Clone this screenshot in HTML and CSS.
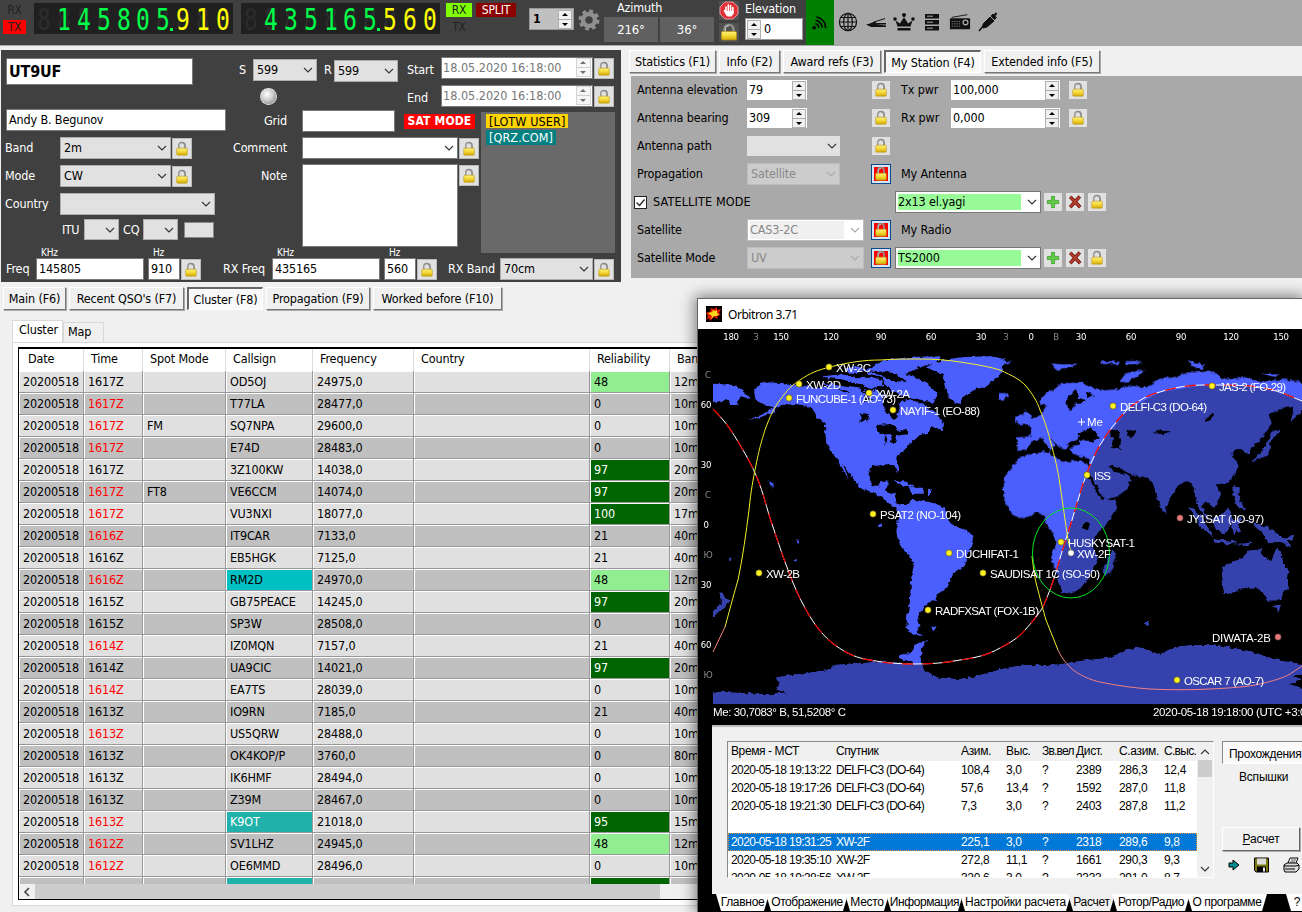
FILE: index.html
```html
<!DOCTYPE html>
<html lang="en">
<head>
<meta charset="utf-8">
<title>Logger</title>
<link rel="stylesheet" href="styles.css">
</head>
<body>
<svg class="defs" width="0" height="0" aria-hidden="true">
  <defs>
    <linearGradient id="gold" x1="0" x2="0" y1="0" y2="1"><stop offset="0" stop-color="#fff27a"/><stop offset=".5" stop-color="#f4d838"/><stop offset="1" stop-color="#d3aa08"/></linearGradient>
    <symbol id="lock" viewBox="0 0 16 18"><path d="M4.500 9V5.500a3.500 3.700 0 0 1 7 0V9" fill="none" stroke="#8d8d8d" stroke-width="2"/><path d="M5 8V5.500a3 3 0 0 1 3-3" fill="none" stroke="#d4d4d4" stroke-width=".8"/><rect x="2" y="8" width="12" height="8" rx="1" fill="url(#gold)" stroke="#b89918" stroke-width=".7"/></symbol>
    <symbol id="chev" viewBox="0 0 10 6"><path d="M1 1l4 4 4-4" fill="none" stroke="currentColor" stroke-width="1.100"/></symbol>
    <symbol id="plus" viewBox="0 0 16 16"><path d="M6.200 1.500h3.600v4.700h4.700v3.600H9.800v4.700H6.200V9.800H1.500V6.200h4.700z" fill="#62cc44" stroke="#2c9a20" stroke-width=".8"/></symbol>
    <symbol id="cross" viewBox="0 0 16 16"><path d="M2.500 2L14 14M13.500 1.500L2.500 14" stroke="#6a2018" stroke-width="4"/><path d="M2.800 2.300L13.700 13.700M13.200 2L2.800 13.500" stroke="#b83a28" stroke-width="2.200"/></symbol>
  </defs>
</svg>
<header class="toolbar">
  <div class="rxtx"><span>RX</span><span class="on-red">TX</span></div>
  <div class="led" data-value=" 145805.910"></div>
  <div class="led" data-value=" 435165.560"></div>
  <div class="rxtx second"><span class="on-green">RX</span><span>TX</span></div>
  <span class="split">SPLIT</span>
  <div class="spin grey"><b>1</b><i class="ud"></i></div>
  <svg class="gear" viewBox="0 0 22 22"><circle cx="11" cy="11" r="6" fill="none" stroke="#8f8f8f" stroke-width="4.600"/><circle cx="11" cy="11" r="8.800" fill="none" stroke="#8f8f8f" stroke-width="3.400" stroke-dasharray="3.700 3.211"/></svg>
  <div class="azimuth"><span>Azimuth</span><div class="angles"><b>216°</b><b>36°</b></div></div>
  <div class="stopcol">
    <svg viewBox="0 0 20 19"><path d="M6 1h8l5 5v7l-5 5H6l-5-5V6z" fill="#e03038" stroke="#f0b0b0" stroke-width=".8"/><path d="M7 12V6M9.300 11V4M11.600 11V4.500M13.800 12V6.500M5.500 9.500L8 14" stroke="#fff" stroke-width="1.600" stroke-linecap="round"/><path d="M6.300 10h8.300v2.500L12.500 15.500H8.500z" fill="#fff"/></svg>
    <svg viewBox="0 0 16 18" preserveAspectRatio="none"><use href="#lock"/></svg>
  </div>
  <div class="elev"><span>Elevation</span><div class="spin left"><i class="ud"></i><b>0</b></div></div>
  <div class="cast"><svg viewBox="0 0 16 16"><circle cx="3" cy="13" r="1.700"/><path d="M4 9.200a4 4 0 0 1 3.300 4M4.500 6a7 7 0 0 1 6 7M5 2.800a10 10 0 0 1 8.800 10.500" fill="none" stroke="#000" stroke-width="1.500"/></svg></div>
  <div class="modules">
    <svg viewBox="0 0 20 20" fill="none" stroke="#111" stroke-width="1.200"><circle cx="10" cy="10" r="8.600"/><ellipse cx="10" cy="10" rx="4.300" ry="8.600"/><path d="M1.400 10h17.200M10 1.400v17.200M3 5.500h14M3 14.500h14"/></svg>
    <svg viewBox="0 0 22 20"><path d="M1 12.500c3-.500 6-2 9-3l1 1.500h10v1.500H11l10 1v1.500H6z" fill="#111"/><path d="M9 10L20 6.500" stroke="#111"/></svg>
    <svg viewBox="0 0 22 20"><path d="M4.500 14.500L2.500 8.500l4.500 3 4-6.500 4 6.500 4.500-3-2 6zM4.500 16h13v2.500h-13z" fill="#111"/><circle cx="2" cy="7" r="1.800" fill="#111"/><circle cx="20" cy="7" r="1.800" fill="#111"/><circle cx="11" cy="3" r="2" fill="#111"/></svg>
    <svg viewBox="0 0 20 20"><path d="M3 2h14v4.500H3zM3 8h14v4.500H3zM3 14h14v4.500H3z" fill="#111"/><path d="M5 4.200h6M5 10.200h6M5 16.200h6" stroke="#a9a9a9"/></svg>
    <svg viewBox="0 0 24 20"><path d="M2 6h20a1 1 0 0 1 1 1V18H1V7a1 1 0 0 1 1-1z" fill="#111"/><path d="M3 5l17-3" stroke="#111"/><circle cx="18" cy="10.500" r="3.300" fill="#a9a9a9"/><circle cx="18" cy="10.500" r="1.800"/><path d="M3 9.500h9M3 12h9M3 14.500h9" stroke="#777" stroke-dasharray="1.500 1"/></svg>
    <svg viewBox="0 0 20 20"><path d="M1 19l5-6" stroke="#111" stroke-width="1.500"/><path d="M5 12l7-7 4 4-7 6-4 1zM11 5l5 5M13 4l3.500 3.500 1.800-1.700L15 2z" fill="#111" stroke="#111"/><path d="M16 4l2.500-3" stroke="#111" stroke-width="2"/></svg>
  </div>
</header>

<main class="upper">
  <section class="qso">
    <div class="qso-main">
      <div class="qso-left">
        <div class="inp call">UT9UF</div>
        <div class="inp name">Andy B. Begunov</div>
        <div class="row"><label>Band</label><div class="combo w111">2m<svg><use href="#chev"/></svg></div><span class="lk"><svg><use href="#lock"/></svg></span></div>
        <div class="row"><label>Mode</label><div class="combo w111">CW<svg><use href="#chev"/></svg></div><span class="lk"><svg><use href="#lock"/></svg></span></div>
        <div class="row"><label>Country</label><div class="combo w155"><svg><use href="#chev"/></svg></div></div>
        <div class="row itu"><label>ITU</label><div class="combo w35"><svg><use href="#chev"/></svg></div><label>CQ</label><div class="combo w35"><svg><use href="#chev"/></svg></div><span class="blank"></span></div>
      </div>
      <div class="qso-right">
        <div class="qso-top">
          <div class="rst">
            <div class="row"><label>S</label><div class="combo w64">599<svg><use href="#chev"/></svg></div><label class="r">R</label><div class="combo w64 low">599<svg><use href="#chev"/></svg></div></div>
            <span class="bulb"></span>
          </div>
          <div class="times">
            <div class="row"><label>Start</label><div class="inp time">18.05.2020 16:18:00<i class="ud dim"></i></div><span class="lk"><svg><use href="#lock"/></svg></span></div>
            <div class="row"><label>End</label><div class="inp time">18.05.2020 16:18:00<i class="ud dim"></i></div><span class="lk"><svg><use href="#lock"/></svg></span></div>
          </div>
        </div>
        <div class="qso-mid">
          <div class="notes">
            <div class="row"><label>Grid</label><div class="inp grid"></div><strong class="sat">SAT MODE</strong></div>
            <div class="row"><label>Comment</label><div class="combo white w156"><svg><use href="#chev"/></svg></div><span class="lk"><svg><use href="#lock"/></svg></span></div>
            <div class="row note"><label>Note</label><div class="inp area"></div><span class="lk"><svg><use href="#lock"/></svg></span></div>
          </div>
          <div class="flags"><span class="lotw">[LOTW USER]</span><span class="qrz">[QRZ.COM]</span></div>
        </div>
      </div>
    </div>
    <div class="freq">
      <label class="f1">Freq</label>
      <div class="fld w108"><small>KHz</small><div class="inp">145805</div></div>
      <div class="fld w32"><small>Hz</small><div class="inp">910</div></div>
      <span class="lk"><svg><use href="#lock"/></svg></span>
      <label class="f2">RX Freq</label>
      <div class="fld w108"><small>KHz</small><div class="inp">435165</div></div>
      <div class="fld w32"><small>Hz</small><div class="inp">560</div></div>
      <span class="lk"><svg><use href="#lock"/></svg></span>
      <label class="f3">RX Band</label>
      <div class="combo w93">70cm<svg><use href="#chev"/></svg></div>
      <span class="lk"><svg><use href="#lock"/></svg></span>
    </div>
  </section>
  <section class="station">
    <nav class="fbar"><span class="fb w87">Statistics (F1)</span><span class="fb w61">Info (F2)</span><span class="fb w98">Award refs (F3)</span><span class="fb w97 active">My Station (F4)</span><span class="fb w116">Extended info (F5)</span></nav>
    <div class="st-grid">
      <label>Antenna elevation</label><div class="spin flat w60">79<i class="ud"></i></div><span class="lk p"><svg><use href="#lock"/></svg></span>
      <div class="rt"><label>Tx pwr</label><div class="spin flat w109">100,000<i class="ud"></i></div><span class="lk p"><svg><use href="#lock"/></svg></span></div>
      <label>Antenna bearing</label><div class="spin flat w60">309<i class="ud"></i></div><span class="lk p"><svg><use href="#lock"/></svg></span>
      <div class="rt"><label>Rx pwr</label><div class="spin flat w109">0,000<i class="ud"></i></div><span class="lk p"><svg><use href="#lock"/></svg></span></div>
      <label>Antenna path</label><div class="combo plain w93"><svg><use href="#chev"/></svg></div><span class="lk p"><svg><use href="#lock"/></svg></span><div></div>
      <label>Propagation</label><div class="combo dis w93">Satellite<svg><use href="#chev"/></svg></div><span class="lk red"><svg><use href="#lock"/></svg></span><div class="rt"><label>My Antenna</label></div>
      <div class="check"><svg viewBox="0 0 13 13"><rect x=".5" y=".5" width="12" height="12" fill="#fff" stroke="#222"/><path d="M2.500 6.500l3 3 5-6" fill="none" stroke="#222" stroke-width="1.300"/></svg>SATELLITE MODE</div><div class="rt"><div class="pick"><span>2x13 el.yagi</span><svg><use href="#chev"/></svg></div><span class="lk p"><svg><use href="#plus"/></svg></span><span class="lk p"><svg><use href="#cross"/></svg></span><span class="lk p"><svg><use href="#lock"/></svg></span></div>
      <label>Satellite</label><div class="combo dis wht w117"><em>CAS3-2C</em><svg><use href="#chev"/></svg></div><span class="lk red"><svg><use href="#lock"/></svg></span><div class="rt"><label>My Radio</label></div>
      <label>Satellite Mode</label><div class="combo dis w117">UV<svg><use href="#chev"/></svg></div><span class="lk red"><svg><use href="#lock"/></svg></span><div class="rt"><div class="pick"><span>TS2000</span><svg><use href="#chev"/></svg></div><span class="lk p"><svg><use href="#plus"/></svg></span><span class="lk p"><svg><use href="#cross"/></svg></span><span class="lk p"><svg><use href="#lock"/></svg></span></div>
    </div>
  </section>
</main>

<nav class="fbar lower"><span class="fb w63">Main (F6)</span><span class="fb w115">Recent QSO's (F7)</span><span class="fb w76 active">Cluster (F8)</span><span class="fb w104">Propagation (F9)</span><span class="fb w129">Worked before (F10)</span></nav>
<div class="subtabs"><span class="cur">Cluster</span><span>Map</span></div>
<section class="pane"><div class="table">
  <div class="tr head"><span>Date</span><span>Time</span><span>Spot Mode</span><span>Callsign</span><span>Frequency</span><span>Country</span><span>Reliability</span><span>Band</span></div>
  <div class="rows" id="spots"></div>
  <div class="hscroll"><svg viewBox="0 0 8 10"><path d="M6 1L2 5l4 4" fill="none" stroke="#444" stroke-width="1.600"/></svg><i></i></div>
</div></section>

<aside class="orbitron">
  <div class="title"><svg viewBox="0 0 16 16"><rect width="16" height="16"/><path d="M0 7l5-2-1-3 4 1 3-2v3l4-1-2 4 2 2-4 1 1 3-4-2-4 4-1-3-3 2 2-4z" fill="#e31b00"/><path d="M2 7l4-1 1-2 2 1 2-1v3l2 1-2 2-3 0-3 3 1-3z" fill="#ffd51a"/></svg>Orbitron 3.71</div>
  <svg class="map" viewBox="698 329 604 394">
    <defs>
      <filter id="coast" x="0" y="0" width="100%" height="100%"><feTurbulence type="fractalNoise" baseFrequency=".2" numOctaves="2" seed="8"/><feDisplacementMap in="SourceGraphic" scale="5" xChannelSelector="R" yChannelSelector="G"/></filter>
      <path id="dayline" d="M713 409C723 419 730 428 737 440C745 453 751 464 755 473C762 488 765 502 770 518C775 533 779 545 785 562C791 578 797 594 805 608C815 626 823 636 835 645C847 654 857 658 870 660C885 663 900 664 915 664C930 664 945 663 960 660C975 658 988 655 1000 648C1010 643 1018 638 1025 630C1033 621 1038 615 1043 607C1049 593 1054 580 1058 565C1062 551 1067 536 1072 520C1076 507 1079 496 1083 484C1088 470 1093 457 1100 445C1108 432 1117 420 1127 410C1137 401 1148 395 1160 392C1175 387 1190 385 1205 385C1220 385 1235 385 1250 386C1263 387 1275 390 1285 394L1302 401"/>
      <clipPath id="night"><path d="M713 409L737 440L755 473L770 518L785 562L805 608L835 645L870 660L915 664L960 660L1000 648L1025 630L1043 607L1058 565L1072 520L1083 484L1100 445L1127 410L1160 392L1205 385L1250 386L1285 394L1302 401V704H713z"/></clipPath>
      <clipPath id="frame"><rect x="713" y="345" width="589" height="359"/></clipPath>
      <g id="land">
        <g transform="translate(697 298) scale(.3333)">
          <path d="M48 254L110 258L120 268L150 288L158 300L128 292L118 316L100 318L85 300L60 312L30 300V254z"/>
          <path d="M168 276L185 255L205 250L260 253L330 262L360 268L400 262L440 280L480 268L500 282L530 270L555 290L560 335L590 362L604 340L605 310L640 300L680 318L700 335L720 350L738 375L735 394L700 382L690 402L660 410L640 430L622 450L600 470L597 490L606 512L600 522L590 500L570 496L520 502L512 530L520 558L545 562L552 545L572 548L562 575L590 585L597 615L625 618L640 602L700 610L740 625L750 665H605L598 634L575 612L545 590L510 578L480 560L460 530L434 492L452 540L428 505L415 478L395 455L385 430L382 400L380 370L358 355L345 335L325 320L290 315L250 318L225 340L180 358L150 361L190 348L230 325L195 318L172 300z"/>
          <path d="M680 205L740 182L800 174L880 172L918 180V210L890 240L870 262L835 270L800 290L785 318L770 312L750 290L740 260L735 225L700 212zM505 212L560 183L640 174L730 172L715 192L660 205L630 222L570 236L515 226zM375 232L430 226L480 236L540 236L560 258L510 272L450 276L405 268L375 254zM545 228L610 222L660 236L695 262L722 285L705 312L650 298L610 290L570 268z"/>
          <path d="M578 542L625 548L655 566L620 562zM634 566L680 566V584L640 584zM690 570h9v18h-9zM208 543l20 12-4 14zM440 208l40-6 30 12-50 10zM868 268l14-6z"/>
        </g>
        <g transform="translate(1000 298) scale(.3333)">
          <path d="M5 560L10 535L38 500L52 475L90 465L145 455L150 470L185 488L240 485L265 500L290 560L312 602L348 606L345 630L325 665L285 705L272 740L290 775L280 800L262 835L235 870L210 882L185 880L170 830L158 800L150 776L165 735L155 700L135 675L132 655L110 640L85 652L50 658L25 635L8 600z"/>
          <path d="M46 455L48 415L88 412L92 388L72 372L100 358L122 345L138 318L118 318V298L150 275L185 252L240 250L300 275L350 270L380 260L440 265L470 240L520 235L560 220L640 218L665 240L740 235L780 250L840 240L915 250V325L870 365L882 322L850 325L800 345L812 370L795 400L770 425L750 445L740 468L720 445L700 450L690 465L712 500L700 530L680 550L645 555L658 590L640 625L610 605L600 620L625 665L600 640L585 600L580 565L560 545L540 550L510 590L497 620L485 630L470 600L455 550L440 535L410 530L345 510L390 540L375 570L350 590L315 600L295 570L275 530L262 480L210 462L205 445L235 435L240 420L205 430L190 452L160 430L140 410L164 440L150 455L120 418L90 430L75 455z"/>
          <path d="M50 375L72 335L90 345L98 370L60 380zM44 350l20-4-4 20-18 2zM355 248L375 222L435 212L405 234L370 252zM148 193L190 196L232 193L200 208L170 214zM560 184L612 198L602 212L570 200zM302 188h50v7h-50zM370 186h50l-8 9h-38zM-6 186h38l-24 12h-14zM-6 282h26l4 10-16 10h-14zM745 490L775 468L796 440L812 398L837 393L808 427L803 467L760 484zM695 558L716 570L712 600L732 630L712 624L696 590zM488 618l10 12-4 16-10-8zM780 222l60 2-20 10z"/>
          <path d="M313 831L306 806L318 786L338 754L344 776L330 823z"/>
        </g>
        <g transform="translate(697 510) scale(.3333)">
          <path d="M597 40L600 15L625-18L650-30L700-22L740-10L745 20L765 45L800 55L828 75L826 100L808 130L800 165L765 190L750 225L718 252L716 268L690 275L672 295L660 320L668 345L655 350L660 365L675 375L645 370L625 350L628 310L635 280L640 200L650 155L625 130L605 100L595 65zM696 352l20-6-6 12zM605 432L640 425L650 400L688 388L672 410L668 440L678 482H640L645 455L600 440z"/>
          <path d="M30 542L110 545L200 550L270 548L235 535L245 515L232 500L300 490L390 478L410 462L450 460L510 455L560 452L640 460L680 480L720 500L780 505L830 498L880 482L920 478V600H30zM65 242L85 265L97 268L78 292L40 322V306L70 278zM540 40h12v10h-10zM294 86l10 12-4 5zM92 146l10-7-6 12zM288 145h8v6h-8z"/>
        </g>
        <g transform="translate(1000 510) scale(.3333)">
          <path d="M-10 478L30 468L80 462L160 462L240 450L330 440L380 415L420 410L450 420L475 432L520 408L580 402L640 402L700 412L760 425L840 450L915 462V490L870 492L900 506L866 520L915 535V600H-10z"/>
          <path d="M662 170L685 155L720 145L740 120L780 115L785 140L810 150L830 106L845 150L862 185L860 225L835 268L800 268L790 250L765 228L720 235L690 245L670 245L665 210zM816 282L840 282L832 304zM566-12L602 16L624 56L636 76L600 48zM634 25L685-8L696 30L672 70L643 52zM636 82L704 92V100L642 94zM692 35L722 16L718 32L708 38L720 62L706 56L700 72zM740 26L760 38L800 48L850 83L874 112L830 92L800 97L785 65zM845 85l32-14-8 16zM432 331h15v12h-12zM705 98h28l18-9-10 16z"/>
        </g>
      </g>
    </defs>
    <rect x="698" y="329" width="604" height="394"/>
    <g clip-path="url(#frame)">
      <g transform="translate(1 1)"><use href="#land" fill="#4c5fff" filter="url(#coast)"/></g>
      <g clip-path="url(#night)"><g transform="translate(1 1)"><use href="#land" fill="#3543ae" filter="url(#coast)"/></g></g>
      <g fill="#000" filter="url(#coast)">
        <path d="M877 425l14-1 8 7 7-2 2 5-11 2-3 8-4-1 2-9-12 1zM860 413l9 1-1 9-3-3-5 3 2-6zM885 436l4 1-5 9zM820 378l20 1 20 5 15 7-20-3-32-5zM850 368l20 3 24 10 14 1-14-9zM864 395l10 4-9 3z"/>
        <path d="M1079 433l10-5 11 9-8 4-14-1zM1110 431l8-1 3 10-1 9-9-1 2-9zM1128 430l8 1-3 7-6-2zM1066 401l6-8 4-3 2 8 8 2-6 4-4-2-5 9-3-3zM1205 419l9-7-3 8-6 2zM1153 433l8-4 9 4-9 1zM1108 465l14 4 5 5-12-2zM1084 522l6 1-2 7-6-2zM1090 474l14 26-4-1-12-23zM1087 392l7 3-7 3z"/>
      </g>
    </g>
    <use href="#dayline" class="line" stroke="#fff"/>
    <use href="#dayline" class="line" stroke="#e80000" stroke-width="1.300" stroke-dasharray="11 9"/>
    <path class="line" stroke="#f2ee28" d="M725 627C731 605 735 590 738 580C743 556 746 533 749 510C751 490 753 480 756 465C760 445 762 440 765 430C770 416 774 408 780 400C787 390 792 385 800 380C810 373 818 370 830 367C850 362 865 360 880 360C895 359 905 359 920 359C935 359 947 360 960 362C980 365 990 367 1000 370C1013 376 1019 379 1025 385C1032 393 1037 401 1040 410C1045 422 1048 431 1050 440C1055 458 1058 470 1060 485C1063 505 1065 520 1068 540L1071 552M1032 556C1034 573 1035 580 1038 590C1041 602 1043 610 1046 620L1058 650"/>
    <path class="line" stroke="#f28080" d="M713 652L725 627M1058 650C1062 659 1067 664 1073 670C1083 677 1093 681 1105 683C1120 686 1135 688 1150 689C1170 690 1190 690 1210 689C1230 688 1247 687 1260 684C1273 681 1283 678 1290 674L1302 666"/>
    <ellipse class="line" stroke="#00e620" cx="1071" cy="553" rx="38.500" ry="45"/>
    <g id="mapmarks"></g>
  </svg>
  <div class="passes">
    <div class="plist">
      <div class="prow phead"><span>Время - МСТ</span><span>Спутник</span><span>Азим.</span><span>Выс.</span><span>Зв.вел</span><span>Дист.</span><span>С.азим.</span><span>С.выс.</span></div>
      <div class="pbody" id="passes"></div>
      <div class="vscroll"><svg><use href="#chev"/></svg><i></i><svg><use href="#chev"/></svg></div>
    </div>
    <div class="pside">
      <span class="pressed">Прохождения</span><span class="flat2">Вспышки</span><span class="push"><u>Р</u>асчет</span>
      <div class="picons">
        <svg viewBox="0 0 12 12"><path d="M1 4h4V1l6 5-6 5V8H1z" fill="#008c8c" stroke="#000"/></svg>
        <svg viewBox="0 0 15 15"><path d="M.5.500h14v14H2l-1.500-1.500z" fill="#7a7a10" stroke="#000"/><rect x="3" y="1" width="9" height="6" fill="#ddd"/><rect x="3" y="9" width="9" height="5.500"/><rect x="9" y="10" width="2" height="4" fill="#eee"/></svg>
        <svg viewBox="0 0 17 16"><path d="M5 6L7 1h8l-2 5" fill="#fff" stroke="#000"/><path d="M1 8l3-2h10l2 2v4l-3 3H2l-1-2z" fill="#ddd" stroke="#000"/><path d="M1 9h12l3-1M2 12h10" stroke="#000" fill="none"/><path d="M8 3h5M7 5h5" stroke="#000" stroke-width=".7"/></svg>
      </div>
    </div>
  </div>
  <div class="otabs"><span class="t1">Главное</span><span class="t2">Отображение</span><span class="t3">Место</span><span class="t4">Информация</span><span class="t5">Настройки расчета</span><span class="t6 sel">Расчет</span><span class="t7">Ротор/Радио</span><span class="t8">О программе</span><span class="t9">?</span></div>
</aside>
<script src="script.js"></script>
</body>
</html>
```

FILE: styles.css
```css
* { box-sizing: border-box; }
body { margin: 0; width: 1302px; height: 912px; overflow: hidden; position: relative; background: #f0f0f0; font: 12.5px "DejaVu Sans Condensed", "DejaVu Sans", sans-serif; font-stretch: condensed; letter-spacing: -.15px; color: #000; white-space: nowrap; line-height: 16px; }
.defs { display: block; }
i, em { font-style: normal; }
.toolbar { display: flex; align-items: flex-start; height: 46px; background: #404040; border-bottom: 1px solid #aaa; }
.rxtx { display: flex; flex-direction: column; gap: 3px; width: 23px; margin: 3px 8px 0 3px; color: #222; font-size: 12px; text-align: center; line-height: 14px; }
.rxtx.second { width: 26px; margin: 3px 4px 0 6px; }
.on-red { background: #f00; }
.on-green { background: #7fff00; }
.led { display: flex; width: 199px; height: 31px; margin-top: 3px; margin-right: 8px; background: #202020; }
.led + .rxtx { margin-left: -2px; }
.digit { position: relative; width: 19.900px; height: 31px; flex: none; font: 31px/33px "DejaVu Sans Mono", monospace; letter-spacing: 0; text-align: center; color: #00ff48; }
.digit.y { color: #ff0; }
.digit span, .digit::before { display: block; width: 20px; transform: scaleX(.74); }
.digit::before { content: "8"; position: absolute; left: 0; top: 0; color: #2c2c2c; }
.digit span { position: relative; }
.digit .dot { position: absolute; right: 0; bottom: 3px; width: 3px; height: 3px; background: currentColor; }
.split { width: 40px; height: 14px; margin: 3px 13px 0 0; background: #8b0000; color: #fff; font-size: 12px; line-height: 15px; text-align: center; }
.spin { display: flex; align-items: center; justify-content: space-between; height: 22px; background: #fff; border: 1px solid #999; padding: 0 1px 0 3px; }
.spin.grey { width: 45px; background: #c0c0c0; margin: 8px 4px 0 0; }
.ud { width: 14px; height: 19px; flex: none; background: linear-gradient(#aaa, #aaa) 0 8px/14px 1px no-repeat, #f0f0f0; border: 1px solid #b0b0b0; position: relative; }
.ud::before, .ud::after { content: ""; position: absolute; left: 3px; border: 3px solid transparent; }
.ud::before { border-bottom-color: #000; border-bottom-width: 3px; top: -1px; }
.ud::after { bottom: -1px; border-top-color: #000; border-top-width: 3px; }
.ud.dim { opacity: .55; }
.gear { width: 22px; height: 22px; margin: 9px 4px 0 0; }
.azimuth { width: 110px; margin-right: 5px; color: #fff; }
.azimuth > span { display: block; margin-left: 13px; height: 17px; }
.angles { display: flex; gap: 2px; }
.angles b { flex: 1; height: 25px; background: #606060; font-weight: normal; line-height: 25px; text-align: center; font-size: 13px; }
.stopcol { display: flex; flex-direction: column; gap: 3px; width: 20px; margin: 1px 6px 0 0; }
.stopcol svg { width: 20px; height: 19px; background: #505050; }
.elev { width: 58px; margin-right: 3px; color: #fff; }
.elev > span { display: block; height: 18px; line-height: 17px; }
.spin.left { color: #000; justify-content: flex-start; gap: 3px; padding-left: 1px; }
.spin.left b { font-weight: normal; }
.cast { width: 28px; height: 45px; background: green; }
.cast svg { width: 17px; height: 17px; margin: 14px 0 0 5px; }
.modules { display: flex; gap: 6px; flex: 1; height: 45px; background: #a9a9a9; padding: 12px 0 0 3px; }
.modules svg { width: 22px; height: 20px; flex: none; }
.upper { display: flex; height: 240px; }
.qso { width: 620px; height: 232px; margin: 4px 8px 0 1px; background: #404040; color: #fff; }
.qso-main { display: flex; height: 197px; }
.qso-left { width: 231px; padding: 8px 0 0 5px; display: flex; flex-direction: column; gap: 6px; }
.inp { height: 22px; background: #fff; color: #000; border: 1px solid #7a7a7a; padding: 0 2px; line-height: 20px; }
.call { width: 187px; height: 27px; margin-bottom: 18px; font: bold 16px/25px "DejaVu Sans Condensed", "DejaVu Sans", sans-serif; font-stretch: condensed; }
.name { width: 220px; }
.row { display: flex; height: 22px; align-items: center; }
.qso-left .row { margin-left: -1px; }
.qso-left .row > label { width: 55px; }
.combo { display: flex; align-items: center; justify-content: space-between; height: 22px; background: #e1e1e1; border: 1px solid #adadad; color: #000; padding: 0 3px; }
.combo svg { width: 10px; height: 6px; margin-left: auto; color: #333; flex: none; }
.combo.white { background: #fff; border-color: #7a7a7a; }
.w111 { width: 111px; } .w155 { width: 155px; } .w35 { width: 35px; } .w64 { width: 64px; } .w156 { width: 156px; } .w93 { width: 93px; } .w117 { width: 117px; } .w108 { width: 108px; } .w32 { width: 32px; } .w60 { width: 60px; } .w109 { width: 109px; }
.w87 { width: 87px; } .w61 { width: 61px; } .w98 { width: 98px; } .w97 { width: 97px; } .w116 { width: 116px; } .w63 { width: 63px; } .w115 { width: 115px; } .w76 { width: 76px; } .w104 { width: 104px; } .w129 { width: 129px; }
.lk { display: flex; align-items: center; justify-content: center; width: 20px; height: 21px; margin: 1px 0 0 1px; background: #e1e1e1; border: 1px solid #bbb; flex: none; }
.lk svg { width: 14px; height: 16px; }
.qso-left .itu { height: 21px; margin: -2px 0 0; }
.itu .combo { height: 21px; }
.qso-left .itu label { width: auto; }
.qso-left .itu label:first-child { margin: 0 4px 0 56px; width: 18px; letter-spacing: -.5px; }
.qso-left .itu label + div + label { width: 20px; margin: 0 0 0 4px; }
.blank { width: 30px; height: 16px; background: #e1e1e1; border: 1px solid #888; margin-left: 6px; }
.qso-right { width: 389px; }
.qso-top { display: flex; height: 59px; }
.rst { width: 173px; padding: 9px 0 0 7px; }
.rst label { width: 14px; }
.rst label.r { width: 10px; margin-left: 7px; }
.rst .low { position: relative; top: 1px; }
.bulb { display: block; width: 17px; height: 17px; margin: 7px 0 0 21px; border-radius: 50%; background: radial-gradient(circle at 40% 35%, #fff, #ccc 45%, #777); border: 1px dotted #fff; }
.times { padding-top: 7px; display: flex; flex-direction: column; gap: 6px; }
.times label { width: 36px; padding: 4px 0 0 2px; }
.time { width: 152px; color: #777; display: flex; justify-content: space-between; padding: 0 1px 0 1px; letter-spacing: 0; }
.time .ud { width: 15px; }
.qso-mid { display: flex; align-items: flex-start; }
.notes { width: 249px; padding-top: 1px; display: flex; flex-direction: column; gap: 5px; }
.notes label { width: 55px; margin-right: 15px; text-align: right; }
.grid { width: 93px; }
.sat { margin-left: 9px; width: 71px; height: 15px; background: #f00; line-height: 15px; font-size: 12px; letter-spacing: .15px; text-align: center; }
.note { height: 83px; align-items: flex-start; }
.note label { padding-top: 4px; }
.area { width: 156px; height: 83px; }
.flags { width: 134px; height: 141px; margin-top: 3px; background: #696969; padding: 2px 5px; display: flex; flex-direction: column; align-items: flex-start; }
.flags span { height: 15px; line-height: 15px; padding: 0 3px; font-size: 12.500px; letter-spacing: .1px; }
.flags .lotw { background: #ffd400; color: #000; height: 14px; margin-bottom: 2px; }
.qrz { background: #008080; }
.freq { display: flex; align-items: flex-end; height: 33px; padding-left: 5px; }
.fld { margin-right: 4px; }
.fld small { display: block; font-size: 10px; line-height: 10px; padding-left: 5px; }
.freq .w32 { margin-right: 0; }
.freq label { line-height: 22px; }
.f1 { width: 30px; } .f2 { width: 49px; margin-left: 22px; } .f3 { width: 52px; margin-left: 11px; }
.fbar { display: flex; gap: 3px; height: 24px; }
.fb { flex: none; border: 1px solid; border-color: #fff #777 #777 #fff; box-shadow: 1px 1px 0 #aaa; text-align: center; line-height: 21px; height: 23px; }
.fb.active { border-color: #666 #fff #fff #666; border-width: 2px 1px 1px 2px; background: #f9f9f9; line-height: 22px; box-shadow: none; }
.station { padding-top: 4px; flex: 1; }
.st-grid { margin: 2px 0 0 2px; height: 202px; background: #a9a9a9; display: grid; grid-template: repeat(7, 28px)/110px 124px 24px auto; align-items: center; padding-left: 6px; }
.st-grid > .lk, .rt .lk { margin: 0; }
.rt { display: flex; align-items: center; }
.rt > label { margin-left: 6px; width: 50px; }
.spin.flat { border: 0; height: 20px; padding-left: 2px; }
.lk.p { border: 0; width: 18px; height: 18px; margin-left: 1px !important; }
.rt .lk.p { margin-left: 9px !important; }
.rt .pick + .lk { margin-left: 3px !important; }
.rt .pick ~ .lk + .lk { margin-left: 4px !important; }
.lk.red { background: #f00; border: 1px solid #0a4b8c; box-shadow: inset 0 0 0 2px #d4e6f5; height: 20px; }
.combo.plain { border: 0; height: 20px; }
.combo.dis { background: #ccc; border-color: #bdbdbd; color: #888; }
.combo.dis svg { color: #aaa; }
.combo.wht { background: #fff; padding-left: 2px; }
.combo em { background: #f0f0f0; width: 94px; line-height: 18px; }
.check { grid-column: 1/4; display: flex; align-items: center; gap: 6px; margin-left: -3px; letter-spacing: .15px; }
.check svg { width: 13px; height: 13px; }
.pick { width: 146px; height: 22px; border: 1px solid #777; background: #fff; display: flex; align-items: center; padding-left: 2px; }
.pick span { width: 123px; background: #98fb98; line-height: 16px; }
.pick svg { width: 10px; height: 6px; margin-left: 6px; color: #333; }
.lower { margin: 1px 0 1px 3px; }
.subtabs { display: flex; align-items: flex-end; height: 30px; padding-left: 12px; }
.subtabs span { border: 1px solid #d9d9d9; border-bottom: 0; height: 20px; padding: 1px 12px 0 4px; }
.subtabs .cur { background: #fff; height: 22px; padding: 1px 4px 0 6px; }
.pane { margin-left: 12px; border: 1px solid #d9d9d9; background: #fff; height: 564px; padding: 4px 0 0 5px; }
.table { border: 1px solid #000; border-top-width: 2px; height: 553px; width: 760px; background: #fff; }
.tr { display: grid; grid-template-columns: 65px 59px 83px 87px 101px 176px 80px 100px; height: 22px; }
.tr.head { height: 22px; }
.head span { border-right: 1px solid #ddd; padding: 2px 0 0 9px; }
.head span + span { padding-left: 7px; }
.rows { height: 513px; overflow: hidden; }
.rows .tr > span { border: solid #999; border-width: 0 1px 1px 0; box-shadow: inset 1px 1px 0 #fff; padding: 3px 0 0 4px; background: #e0e0e0; overflow: hidden; }
.rows .tr:nth-child(even) > span { background: #c0c0c0; }
.rows .tr .late { color: #f00; }
.rows .tr .g1.g1 { background: #90ee90; }
.rows .tr .g2.g2 { background: #006400; color: #fff; }
.rows .tr .c1.c1 { background: #00c0c4; }
.rows .tr .c2.c2 { background: #20b2aa; color: #fff; }
.hscroll { display: flex; align-items: center; height: 15px; background: #f0f0f0; }
.hscroll svg { width: 8px; height: 10px; margin: 0 4px; }
.hscroll i { width: 625px; height: 15px; background: #cdcdcd; }
.orbitron { position: absolute; left: 697px; top: 298px; width: 605px; height: 614px; background: #000; border: solid #666; border-width: 1px 0 0 1px; box-shadow: 0 0 14px 2px rgba(0, 0, 0, .5); font: 12px/18px "Liberation Sans", Arial, sans-serif; letter-spacing: -.45px; overflow: hidden; }
.title { height: 30px; background: #fff; display: flex; align-items: center; gap: 6px; padding-left: 8px; font: 12px "Noto Sans", sans-serif; letter-spacing: -.45px; }
.title svg { width: 16px; height: 16px; }
.map { display: block; width: 604px; height: 394px; }
.line { fill: none; }
.axis { font: 9.500px "DejaVu Sans Condensed", sans-serif; letter-spacing: -.2px; fill: #fff; text-anchor: middle; }
.axis.faint { fill: #888; }
.sat-name { font: 11.500px "Liberation Sans", Arial, sans-serif; letter-spacing: 0; fill: #fff; }
.passes { display: flex; height: 169px; margin-left: 14px; margin-top: 2px; border-top: 2px solid #bbb; background: #f0f0f0; padding: 14px 0 0 15px; }
.plist { position: relative; flex: none; width: 487px; height: 137px; background: #fff; border: 1px solid #888; border-color: #888 #fff #fff #888; overflow: hidden; }
.prow { display: grid; grid-template-columns: 105px 125px 45px 36px 34px 43px 45px 40px; width: 469px; height: 18px; padding-left: 3px; line-height: 18px; letter-spacing: -.35px; }
.prow span:first-child { letter-spacing: -.6px; }
.prow span:nth-child(2) { letter-spacing: -.75px; }
.phead { background: #f0f0f0; width: 486px; height: 19px; }
.phead span.phead span, .phead span:nth-child(5) { letter-spacing: -.8px; overflow: hidden; }
.phead span:first-child, .phead span:nth-child(2) { letter-spacing: -.4px; }
.phead span:last-child { letter-spacing: -.7px; }
.prow.on { background: #0078d7; color: #fff; outline: 1px dotted #e89038; outline-offset: -1px; }
.vscroll { position: absolute; right: 0; top: 0; width: 16px; height: 135px; background: #f0f0f0; display: flex; flex-direction: column; align-items: center; padding: 7px 0 5px; }
.vscroll svg { width: 10px; height: 6px; color: #333; }
.vscroll svg:first-child { transform: scaleY(-1); }
.vscroll i { width: 14px; height: 17px; background: #cdcdcd; margin: 5px 0 auto; }
.pside { flex: none; margin-left: 8px; width: 90px; display: flex; flex-direction: column; }
.pressed { border: 1px solid; border-color: #888 #fff #fff #888; background: #fafafa; height: 23px; line-height: 24px; padding-left: 6px; letter-spacing: -.3px; }
.flat2 { padding: 4px 0 0 17px; letter-spacing: -.2px; }
.push { width: 78px; height: 24px; margin: 41px 0 6px; border: 1px solid; border-color: #fff #666 #666 #fff; box-shadow: 1px 1px 0 #aaa; text-align: center; line-height: 22px; letter-spacing: -.2px; }
.picons { display: flex; align-items: center; gap: 14px; padding-left: 6px; }
.picons svg { width: 12px; height: 12px; }
.picons svg + svg { width: 15px; height: 16px; }
.picons svg + svg + svg { width: 17px; }
.otabs { display: flex; height: 18px; margin-left: 18px; }
.otabs span { flex: none; height: 17px; background: #fff; text-align: center; line-height: 17px; clip-path: polygon(0 0, 100% 0, calc(100% - 5px) 100%, 5px 100%); margin-right: -3px; letter-spacing: -.3px; }
.otabs .sel { background: #f0f0f0; }
.otabs .t1 { width: 53px; } .otabs .t2 { width: 82px; letter-spacing: -.45px; } .otabs .t3 { width: 44px; } .otabs .t4 { width: 77px; letter-spacing: -.4px; } .otabs .t5 { width: 111px; } .otabs .t6 { width: 47px; } .otabs .t7 { width: 78px; letter-spacing: -.4px; } .otabs .t8 { width: 80px; letter-spacing: -.4px; } .otabs .t9 { width: 40px; margin-left: 22px; padding-right: 18px; }
```

FILE: script.js
```js
const make = (tag, cls, text) => {
  const el = document.createElement(tag);
  if (cls) el.className = cls;
  if (text !== undefined) el.textContent = text;
  return el;
};

document.querySelectorAll(".led").forEach(led => {
  let afterDot = false;
  for (const ch of led.dataset.value) {
    if (ch === ".") {
      led.lastChild.append(make("b", "dot"));
      afterDot = true;
      continue;
    }
    const d = make("div", afterDot ? "digit y" : "digit");
    if (ch !== " ") d.append(make("span", "", ch));
    led.append(d);
  }
});

// time|mode|call|frequency|reliability|band ; "!" marks a late spot
const spots = `1617Z||OD5OJ|24975,0|48|12m
!1617Z||T77LA|28477,0|0|10m
!1617Z|FM|SQ7NPA|29600,0|0|10m
!1617Z||E74D|28483,0|0|10m
1617Z||3Z100KW|14038,0|97|20m
!1617Z|FT8|VE6CCM|14074,0|97|20m
!1617Z||VU3NXI|18077,0|100|17m
!1616Z||IT9CAR|7133,0|21|40m
1616Z||EB5HGK|7125,0|21|40m
!1616Z||RM2D|24970,0|48|12m|c1
1615Z||GB75PEACE|14245,0|97|20m
1615Z||SP3W|28508,0|0|10m
!1614Z||IZ0MQN|7157,0|21|40m
1614Z||UA9CIC|14021,0|97|20m
!1614Z||EA7TS|28039,0|0|10m
1613Z||IO9RN|7185,0|21|40m
!1613Z||US5QRW|28488,0|0|10m
1613Z||OK4KOP/P|3760,0|0|80m
1613Z||IK6HMF|28494,0|0|10m
1613Z||Z39M|28467,0|0|10m
!1613Z||K9OT|21018,0|95|15m|c2
!1612Z||SV1LHZ|24945,0|48|12m
!1612Z||OE6MMD|28496,0|0|10m`;
const box = document.getElementById("spots");
const addSpot = cells => {
  const tr = make("div", "tr");
  cells.forEach(([text, cls]) => tr.append(make("span", cls, text)));
  box.append(tr);
};
spots.split("\n").forEach(line => {
  const [t, mode, call, freq, rel, band, cls] = line.split("|");
  addSpot([["20200518"], [t.replace("!", ""), t[0] === "!" ? "late" : ""], [mode], [call, cls],
    [freq], [""], [rel, rel === "48" ? "g1" : +rel > 90 ? "g2" : ""], [band]]);
});
addSpot([[""], [""], [""], ["", "c2"], [""], [""], ["", "g2"], [""]]);

const passes = [
  ["2020-05-18 19:13:22", "DELFI-C3 (DO-64)", "108,4", "3,0", "?", "2389", "286,3", "12,4"],
  ["2020-05-18 19:17:26", "DELFI-C3 (DO-64)", "57,6", "13,4", "?", "1592", "287,0", "11,8"],
  ["2020-05-18 19:21:30", "DELFI-C3 (DO-64)", "7,3", "3,0", "?", "2403", "287,8", "11,2"],
  [],
  ["2020-05-18 19:31:25", "XW-2F", "225,1", "3,0", "?", "2318", "289,6", "9,8"],
  ["2020-05-18 19:35:10", "XW-2F", "272,8", "11,1", "?", "1661", "290,3", "9,3"],
  ["2020-05-18 19:38:56", "XW-2F", "320,6", "3,0", "?", "2333", "291,0", "8,7"]
];
passes.forEach((p, i) => {
  const row = make("div", i === 4 ? "prow on" : "prow");
  p.forEach(v => row.append(make("span", "", v)));
  document.getElementById("passes").append(row);
});

const marks = document.getElementById("mapmarks");
const svg = (tag, attrs, text) => {
  const el = document.createElementNS("http://www.w3.org/2000/svg", tag);
  for (const k in attrs) el.setAttribute(k, attrs[k]);
  if (text) el.textContent = text;
  marks.append(el);
};
[["180", 731], ["150", 781], ["120", 831], ["90", 881], ["60", 931], ["30", 981], ["0", 1031],
  ["30", 1081], ["60", 1131], ["90", 1181], ["120", 1231], ["150", 1281]]
  .forEach(([t, x]) => svg("text", { x, y: 340, class: "axis" }, t));
[["З", 756], ["З", 1006], ["В", 1056]].forEach(([t, x]) => svg("text", { x, y: 340, class: "axis faint" }, t));
[["60", 408], ["30", 468], ["0", 528], ["30", 588], ["60", 648]]
  .forEach(([t, y]) => svg("text", { x: 706, y, class: "axis" }, t));
[["С", 378], ["С", 498], ["Ю", 558], ["Ю", 678]].forEach(([t, y]) => svg("text", { x: 708, y, class: "axis faint" }, t));

// name, label x, baseline, label length, dot x, dot y, colour
const Y = "#fff01e", P = "#e87878";
[["XW-2C", 836, 372, 35, 829, 367, Y], ["XW-2D", 806, 389, 35, 799, 384, Y],
  ["FUNCUBE-1 (AO-73)", 796, 403, 100, 789, 398, Y], ["XW-2A", 876, 398, 34, 869, 393, Y],
  ["NAYIF-1 (EO-88)", 900, 415, 80, 893, 410, Y], ["DELFI-C3 (DO-64)", 1120, 411, 87, 1113, 406, Y],
  ["JAS-2 (FO-29)", 1219, 391, 67, 1212, 386, Y], ["ISS", 1094, 480, 17, 1087, 475, Y],
  ["PSAT2 (NO-104)", 880, 519, 81, 873, 514, Y], ["JY1SAT (JO-97)", 1187, 523, 77, 1180, 518, P],
  ["DUCHIFAT-1", 956, 558, 63, 949, 553, Y], ["HUSKYSAT-1", 1068, 547, 67, 1061, 542, Y],
  ["XW-2F", 1077, 558, 34, 1071, 553, "#fff"], ["SAUDISAT 1C (SO-50)", 990, 578, 110, 983, 573, Y],
  ["XW-2B", 766, 578, 34, 759, 573, Y], ["RADFXSAT (FOX-1B)", 935, 615, 104, 928, 610, Y],
  ["DIWATA-2B", 1212, 642, 59, 1278, 637, P], ["OSCAR 7 (AO-7)", 1184, 685, 80, 1177, 680, Y]]
  .forEach(([t, x, y, len, cx, cy, fill]) => {
    svg("circle", { cx, cy, r: 3.2, fill, stroke: "#222", "stroke-width": .5 });
    svg("text", { x, y, textLength: len, class: "sat-name" }, t);
  });
svg("path", { d: "M1078 422h7M1081.500 418.500v7", stroke: "#fff" });
svg("text", { x: 1087, y: 426, textLength: 16, class: "sat-name" }, "Me");
svg("text", { x: 713, y: 716, textLength: 133, class: "sat-name" }, "Me: 30,7083° В, 51,5208° С");
svg("text", { x: 1153, y: 716, textLength: 163, class: "sat-name" }, "2020-05-18 19:18:00 (UTC +3:00)");
```
